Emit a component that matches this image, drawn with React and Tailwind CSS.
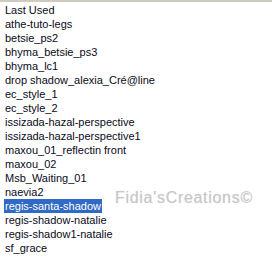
const items = [
  'Last Used',
  'athe-tuto-legs',
  'betsie_ps2',
  'bhyma_betsie_ps3',
  'bhyma_lc1',
  'drop shadow_alexia_Cré@line',
  'ec_style_1',
  'ec_style_2',
  'issizada-hazal-perspective',
  'issizada-hazal-perspective1',
  'maxou_01_reflectin front',
  'maxou_02',
  'Msb_Waiting_01',
  'naevia2',
  'regis-santa-shadow',
  'regis-shadow-natalie',
  'regis-shadow1-natalie',
  'sf_grace',
];

export default function App() {
  return (
    <div
      className="relative w-[272px] h-[278px] bg-white overflow-hidden border-t-2 border-[#cfcbbf]"
      style={{ fontFamily: '"Liberation Sans", Arial, sans-serif' }}
    >
      <ul className="pt-[1px]">
        {items.map((name) => {
          const selected = name === 'regis-santa-shadow';
          return (
            <li key={name} className="h-[14px] leading-[14px] text-[11px] pl-[4px] whitespace-nowrap">
              <span
                className={
                  selected
                    ? 'inline-block px-[1px] bg-[#316ac5] text-white'
                    : 'inline-block px-[1px] text-[#0a0a20]'
                }
              >
                {name}
              </span>
            </li>
          );
        })}
      </ul>
      <div
        className="absolute left-[115px] top-[187px] text-[16px] leading-[18px] tracking-[0.7px] text-[#c8c8c8] whitespace-nowrap"
        style={{ textShadow: '0 0 1px #dcdcdc' }}
      >
        Fidia'sCreations©
      </div>
    </div>
  );
}
